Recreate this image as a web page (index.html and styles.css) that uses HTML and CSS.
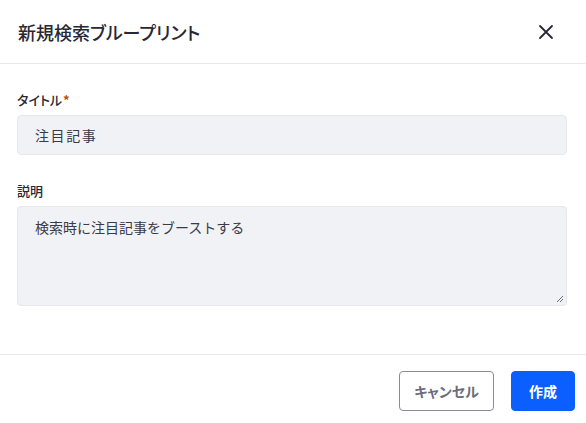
FILE: index.html
```html
<!DOCTYPE html>
<html lang="ja">
<head>
<meta charset="utf-8">
<link rel="stylesheet" href="styles.css">
</head>
<body>
<div class="modal">
  <div class="modal-header">
    <h1 class="modal-title">新規検索ブループリント</h1>
    <button class="close-btn" aria-label="閉じる">
      <svg width="16" height="16" viewBox="0 0 16 16"><path d="M2 2L14 14M14 2L2 14" stroke="#272833" stroke-width="1.8" stroke-linecap="round"/></svg>
    </button>
  </div>
  <div class="modal-body">
    <div class="field">
      <label class="label">タイトル<span class="req">*</span></label>
      <div class="input">注目記事</div>
    </div>
    <div class="field field-desc">
      <label class="label">説明</label>
      <div class="textarea">検索時に注目記事をブーストする
        <svg class="grip" width="8" height="8" viewBox="0 0 8 8"><path d="M7 1L1 7M7 4L4 7" stroke="#6b6c7e" stroke-width="1"/></svg>
      </div>
    </div>
  </div>
  <div class="modal-footer">
    <button class="btn btn-secondary">キャンセル</button>
    <button class="btn btn-primary">作成</button>
  </div>
</div>
</body>
</html>
```
FILE: styles.css
```css
html, body {
  margin: 0;
  padding: 0;
  background: #ffffff;
}
body {
  font-family: "Noto Sans CJK JP", "Noto Sans", sans-serif;
  color: #272833;
}
.modal {
  width: 586px;
  height: 423px;
  display: flex;
  flex-direction: column;
}
.modal-header {
  height: 64px;
  box-sizing: border-box;
  border-bottom: 1px solid #e7e7ed;
  display: flex;
  align-items: center;
  justify-content: space-between;
  padding: 0 32px 0 18px;
}
.modal-title {
  margin: 0;
  font-size: 18px;
  font-weight: 500;
  font-feature-settings: "palt";
  color: #272833;
  line-height: 24px;
}
.close-btn {
  border: 0;
  background: none;
  padding: 0;
  width: 16px;
  height: 16px;
  display: flex;
}
.modal-body {
  padding: 27px 19px 0 17px;
  height: 291px;
  box-sizing: border-box;
  border-bottom: 1px solid #e7e7ed;
}
.field {
  display: flex;
  flex-direction: column;
}
.field-desc {
  margin-top: 27px;
}
.label {
  font-size: 13px;
  font-weight: 500;
  font-feature-settings: "palt";
  line-height: 18px;
  color: #272833;
  margin-bottom: 6px;
}
.req {
  color: #b95000;
  margin-left: 1px;
  font-weight: 700;
}
.input, .textarea {
  background: #f1f2f5;
  border: 1px solid #e7e7ed;
  border-radius: 4px;
  box-sizing: border-box;
  font-size: 14px;
  color: #393a4a;
  padding: 0 17px;
}
.input {
  height: 40px;
  line-height: 38px;
  letter-spacing: 1.6px;
}
.textarea {
  height: 100px;
  line-height: 20px;
  padding-top: 10px;
  position: relative;
}
.grip {
  position: absolute;
  right: 2px;
  bottom: 2px;
}
.modal-footer {
  flex: 1;
  display: flex;
  justify-content: flex-end;
  align-items: flex-start;
  padding: 16px 11px 0 0;
  gap: 17px;
}
.btn {
  height: 40px;
  border-radius: 4px;
  font-family: "Noto Sans CJK JP", "Noto Sans", sans-serif;
  font-size: 14px;
  font-weight: 700;
  padding: 0;
  white-space: nowrap;
  box-sizing: border-box;
}
.btn-secondary {
  width: 95px;
  background: #ffffff;
  border: 1px solid #8a8b9c;
  color: #6b6c7e;
  font-feature-settings: "palt";
}
.btn-primary {
  width: 64px;
  background: #0b5fff;
  border: 1px solid #0b5fff;
  color: #ffffff;
}
```
